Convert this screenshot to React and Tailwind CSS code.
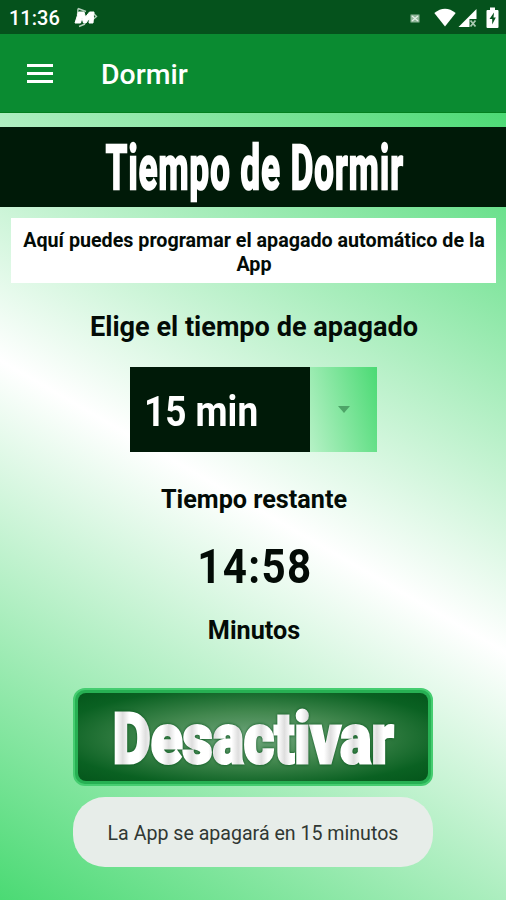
function StatusBar() {
  return (
    <div className="flex h-[34px] items-center bg-[#05521c] pl-[9px] pr-[7px] pt-[2px] text-white">
      <span className="w-[51px] text-[20px] font-medium leading-none whitespace-nowrap">11:36</span>
      <svg className="ml-[14px]" width="24" height="24" viewBox="0 0 24 24">
        <path d="M4 2.500l8 3M5 20.500l6-2.500M4 2.500L3.500 9M19 7l3.500 3.500-3.500 3" stroke="#b5d0bc" strokeWidth="1.4" fill="none" />
        <path d="M4.500 6h5.500l1.500 5 4-5h4.500l-1 11h-4l.5-5-3.500 5h-2.500l-1.500-5-1.500 5H1z" fill="#fff" stroke="#fff" strokeWidth="1" strokeLinejoin="round" />
      </svg>
      <div className="grow" />
      <svg width="10" height="9" viewBox="0 0 10 9">
        <rect x="0.5" y="0.5" width="9" height="8" fill="#8db597" />
        <path d="M2 2l6 5M8 2L2 7" stroke="#e3efe6" strokeWidth="1.3" />
      </svg>
      <svg className="ml-[14px]" width="22" height="20" viewBox="0 0 22 20">
        <path d="M0.3 5Q11-3.5 21.7 5L11 18.5z" fill="#fff" />
      </svg>
      <svg className="ml-[2px]" width="19" height="20" viewBox="0 0 19 20">
        <path d="M18.5 1v10h-7v8H0.5z" fill="#fff" />
        <path d="M12.5 12.5l5 6M17.5 12.5l-5 6" stroke="#a9c9b1" strokeWidth="1.8" />
      </svg>
      <svg className="ml-[9px]" width="13" height="22" viewBox="0 0 13 22">
        <path d="M4 0.5h5v2.5h2.5q1 0 1 1v16q0 1-1 1h-10q-1 0-1-1v-16q0-1 1-1H4z" fill="#fff" />
        <path d="M8 5.5L3.5 12h2.7v5.5L9.8 10.500H7.500z" fill="#05521c" />
      </svg>
    </div>
  );
}

function AppBar() {
  return (
    <div className="flex h-[79px] items-center border-b border-[#03801f] bg-[#0a8b31] pl-[27px] text-white">
      <div className="flex flex-col gap-[5px]">
        <div className="h-[3px] w-[26px] bg-white" />
        <div className="h-[3px] w-[26px] bg-white" />
        <div className="h-[3px] w-[26px] bg-white" />
      </div>
      <h1 className="ml-[48px] pt-[4px] text-[28.4px] font-medium leading-none">Dormir</h1>
    </div>
  );
}

export default function App() {
  return (
    <div className="flex h-[900px] w-[506px] flex-col overflow-hidden font-['Roboto',sans-serif] text-[#030b06]">
      <StatusBar />
      <AppBar />
      <main className="flex grow flex-col items-center bg-[linear-gradient(30deg,#4bda74_0%,#ffffff_50%,#4bda74_100%)] pt-[14px]">
        <div className="flex h-20 w-full items-center justify-center bg-[#001a08] pl-[3px] pt-[2px]">
          <h2 className="scale-x-[0.567] text-[61px] font-bold leading-none tracking-[2px] whitespace-nowrap text-white [-webkit-text-stroke:2.5px_#fff]">
            Tiempo de Dormir
          </h2>
        </div>
        <p className="mt-[11px] h-[65px] w-[485px] bg-white pl-[10px] pr-2 pt-[11px] text-center text-[19.7px] font-bold leading-[24px]">
          Aquí puedes programar el apagado automático de la App
        </p>
        <div className="flex h-[84px] items-center pl-[2px] pt-[5px] text-[27.100px] font-bold whitespace-nowrap">
          Elige el tiempo de apagado
        </div>
        <div className="flex h-[85px] w-[247px]">
          <div className="flex w-[180px] items-center bg-[#001a08] pl-[14px] pt-[4px]">
            <span className="origin-left scale-x-[0.88] text-[42px] font-bold leading-none whitespace-nowrap text-white">15 min</span>
          </div>
          <div className="flex grow items-center justify-center bg-[linear-gradient(75deg,#b6f1c6,#4bda74)] pl-px">
            <svg width="12" height="7" viewBox="0 0 12 7">
              <path d="M0 0h12L6 7z" fill="#4ea468" />
            </svg>
          </div>
        </div>
        <div className="mt-[23px] flex h-12 items-center pl-[2px] pt-[2px] text-[25.200px] font-bold">Tiempo restante</div>
        <div className="flex h-[87px] items-center pl-[3px]">
          <span className="scale-x-[0.86] text-[49px] font-bold leading-none tracking-[1.5px]">14:58</span>
        </div>
        <div className="flex h-10 items-center pl-[2px] pt-[2px] text-[25.200px] font-bold">Minutos</div>
        <button className="mt-[38px] flex h-[98px] w-[360px] items-center justify-center rounded-xl border-2 border-[#45cd70] bg-[#27b053] p-[3px]">
          <span className="flex h-full w-full items-center justify-center rounded-lg bg-[radial-gradient(ellipse_at_center,#6fa57c_0%,#43884f_40%,#0a6122_80%,#04561b_100%)] pt-[3px]">
            <span className="scale-x-[0.825] bg-[repeating-linear-gradient(90deg,#fff_0px,#fff_12px,#dedede_20px,#fff_28px)] bg-clip-text px-2 text-[71px] font-black leading-none whitespace-nowrap text-transparent drop-shadow-[0_0_1.5px_#04501a] [-webkit-text-stroke:3px_transparent]">
              Desactivar
            </span>
          </span>
        </button>
        <div className="mt-[11px] flex h-[70px] w-[360px] items-center justify-center rounded-[32px] bg-[#e7ede9] pt-[3px] text-[19.600px] whitespace-nowrap text-[#303833]">
          La App se apagará en 15 minutos
        </div>
      </main>
    </div>
  );
}
